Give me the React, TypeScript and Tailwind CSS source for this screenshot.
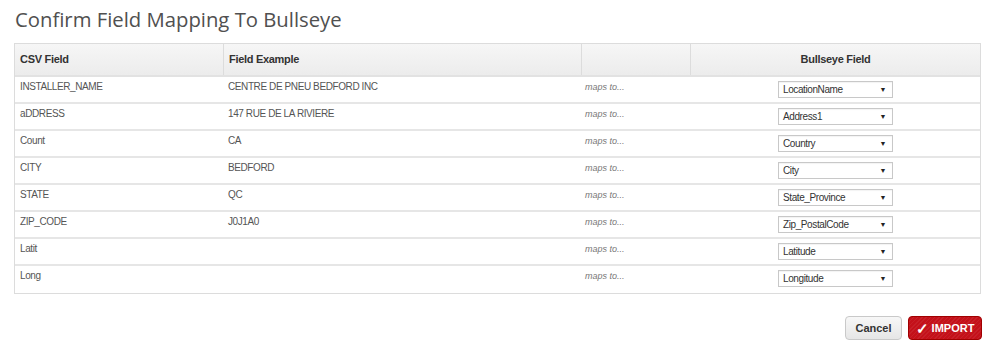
const ROWS = [
  { csv: 'INSTALLER_NAME', example: 'CENTRE DE PNEU BEDFORD INC', field: 'LocationName' },
  { csv: 'aDDRESS', example: '147 RUE DE LA RIVIERE', field: 'Address1' },
  { csv: 'Count', example: 'CA', field: 'Country' },
  { csv: 'CITY', example: 'BEDFORD', field: 'City' },
  { csv: 'STATE', example: 'QC', field: 'State_Province' },
  { csv: 'ZIP_CODE', example: 'J0J1A0', field: 'Zip_PostalCode' },
  { csv: 'Latit', example: '', field: 'Latitude' },
  { csv: 'Long', example: '', field: 'Longitude' },
];

function FakeSelect({ value }: { value: string }) {
  return (
    <div className="mx-auto flex h-[17px] w-[115px] items-center justify-between border border-[#c8c8c8] bg-white pl-[4px] pr-[6px] text-[10px] tracking-[-0.4px] text-[#333] shadow-[inset_0_1px_1px_rgba(0,0,0,0.05)]">
      <span>{value}</span>
      <span className="text-[7px] leading-none text-[#222]">▼</span>
    </div>
  );
}

export default function App() {
  return (
    <div className="h-[352px] w-[994px] bg-white font-['Liberation_Sans',Arial,sans-serif] text-[#555]">
      <h1 className="pl-[15px] pt-[5px] font-['Open_Sans',sans-serif] text-[20.3px] leading-[28px] text-[#505050]">
        Confirm Field Mapping To Bullseye
      </h1>

      <div className="ml-[14px] mt-[10px] w-[967px] border border-[#dcdcdc]">
        {/* header */}
        <div className="grid h-[33px] grid-cols-[209px_358px_109px_1fr] border-b-2 border-[#e2e2e2] bg-gradient-to-b from-[#f6f6f6] to-[#ececec] text-[11px] font-bold tracking-[-0.3px] text-[#333]">
          <div className="flex items-center border-r border-[#dcdcdc] pl-[5px]">CSV Field</div>
          <div className="flex items-center border-r border-[#dcdcdc] pl-[5px]">Field Example</div>
          <div className="border-r border-[#dcdcdc]" />
          <div className="flex items-center justify-center">Bullseye Field</div>
        </div>

        {ROWS.map((row, i) => (
          <div
            key={row.csv}
            className={`grid h-[27px] grid-cols-[209px_358px_109px_1fr] text-[10px] tracking-[-0.4px] ${
              i < ROWS.length - 1 ? 'border-b-2 border-[#e6e6e6]' : ''
            }`}
          >
            <div className="pl-[5px] pt-[4px] leading-[12px]">{row.csv}</div>
            <div className="pl-[4px] pt-[4px] leading-[12px]">{row.example}</div>
            <div className="pl-[3px] pt-[5px] text-[9px] italic leading-[11px] tracking-normal text-[#777]">maps to...</div>
            <div className="pt-[4px]">
              <FakeSelect value={row.field} />
            </div>
          </div>
        ))}
      </div>

      <div className="mr-[12px] mt-[22px] flex justify-end gap-[6px]">
        <button className="h-[24px] w-[57px] rounded-[4px] border border-[#c9c9c9] bg-gradient-to-b from-[#f7f7f7] to-[#e6e6e6] text-[11px] font-bold text-[#333]">
          Cancel
        </button>
        <button className="flex h-[24px] w-[74px] items-center justify-center gap-[3px] rounded-[4px] border border-[#a00000] bg-[#c4111a] bg-[repeating-linear-gradient(135deg,rgba(255,255,255,0.06)_0px,rgba(255,255,255,0.06)_1px,transparent_1px,transparent_3px)] text-[11px] font-bold text-white">
          <span className="text-[15px] leading-none">✓</span>
          <span>IMPORT</span>
        </button>
      </div>
    </div>
  );
}
